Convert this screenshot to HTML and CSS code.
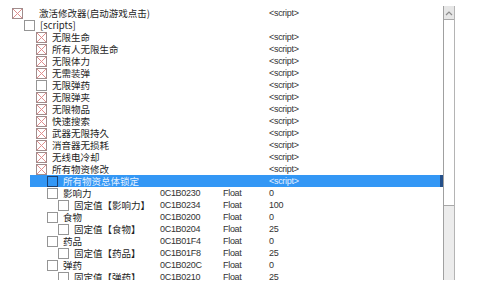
FILE: index.html
```html
<!DOCTYPE html>
<html lang="zh-CN">
<head>
  <meta charset="UTF-8">
  <title>Cheat Table</title>
  <link rel="stylesheet" href="styles.css">
</head>
<body>
  <div class="view">
    <div class="list">
      <div class="row"><div class="name l0"><span class="cb on"></span>激活修改器(启动游戏点击)</div><span class="addr"></span><span class="type"></span><span class="val">&lt;script&gt;</span></div>
      <div class="row"><div class="name l1"><span class="cb"></span>[scripts]</div><span class="addr"></span><span class="type"></span><span class="val"></span></div>
      <div class="row"><div class="name l2"><span class="cb on"></span>无限生命</div><span class="addr"></span><span class="type"></span><span class="val">&lt;script&gt;</span></div>
      <div class="row"><div class="name l2"><span class="cb on"></span>所有人无限生命</div><span class="addr"></span><span class="type"></span><span class="val">&lt;script&gt;</span></div>
      <div class="row"><div class="name l2"><span class="cb on"></span>无限体力</div><span class="addr"></span><span class="type"></span><span class="val">&lt;script&gt;</span></div>
      <div class="row"><div class="name l2"><span class="cb on"></span>无需装弹</div><span class="addr"></span><span class="type"></span><span class="val">&lt;script&gt;</span></div>
      <div class="row"><div class="name l2"><span class="cb"></span>无限弹药</div><span class="addr"></span><span class="type"></span><span class="val">&lt;script&gt;</span></div>
      <div class="row"><div class="name l2"><span class="cb on"></span>无限弹夹</div><span class="addr"></span><span class="type"></span><span class="val">&lt;script&gt;</span></div>
      <div class="row"><div class="name l2"><span class="cb on"></span>无限物品</div><span class="addr"></span><span class="type"></span><span class="val">&lt;script&gt;</span></div>
      <div class="row"><div class="name l2"><span class="cb on"></span>快速搜索</div><span class="addr"></span><span class="type"></span><span class="val">&lt;script&gt;</span></div>
      <div class="row"><div class="name l2"><span class="cb on"></span>武器无限持久</div><span class="addr"></span><span class="type"></span><span class="val">&lt;script&gt;</span></div>
      <div class="row"><div class="name l2"><span class="cb on"></span>消音器无损耗</div><span class="addr"></span><span class="type"></span><span class="val">&lt;script&gt;</span></div>
      <div class="row"><div class="name l2"><span class="cb on"></span>无线电冷却</div><span class="addr"></span><span class="type"></span><span class="val">&lt;script&gt;</span></div>
      <div class="row"><div class="name l2"><span class="cb on"></span>所有物资修改</div><span class="addr"></span><span class="type"></span><span class="val">&lt;script&gt;</span></div>
      <div class="row sel"><div class="name l3"><span class="cb"></span>所有物资总体锁定</div><span class="addr"></span><span class="type"></span><span class="val">&lt;script&gt;</span></div>
      <div class="row"><div class="name l3"><span class="cb"></span>影响力</div><span class="addr">0C1B0230</span><span class="type">Float</span><span class="val">0</span></div>
      <div class="row"><div class="name l4"><span class="cb"></span>固定值【影响力】</div><span class="addr">0C1B0234</span><span class="type">Float</span><span class="val">100</span></div>
      <div class="row"><div class="name l3"><span class="cb"></span>食物</div><span class="addr">0C1B0200</span><span class="type">Float</span><span class="val">0</span></div>
      <div class="row"><div class="name l4"><span class="cb"></span>固定值【食物】</div><span class="addr">0C1B0204</span><span class="type">Float</span><span class="val">25</span></div>
      <div class="row"><div class="name l3"><span class="cb"></span>药品</div><span class="addr">0C1B01F4</span><span class="type">Float</span><span class="val">0</span></div>
      <div class="row"><div class="name l4"><span class="cb"></span>固定值【药品】</div><span class="addr">0C1B01F8</span><span class="type">Float</span><span class="val">25</span></div>
      <div class="row"><div class="name l3"><span class="cb"></span>弹药</div><span class="addr">0C1B020C</span><span class="type">Float</span><span class="val">0</span></div>
      <div class="row"><div class="name l4"><span class="cb"></span>固定值【弹药】</div><span class="addr">0C1B0210</span><span class="type">Float</span><span class="val">25</span></div>
    </div>
    <div class="scrollbar">
      <div class="sb-up">
        <svg width="8" height="6" viewBox="0 0 8 6"><path d="M1 5 L4 2 L7 5" fill="none" stroke="#8c8c8c" stroke-width="1.2"/></svg>
      </div>
      <div class="sb-thumb"></div>
      <div class="sb-track"></div>
    </div>
  </div>
</body>
</html>
```

FILE: styles.css
```css
body {
  margin: 0;
  background-color: #fff;
  color: #222;
}
.view {
  display: flex;
  height: 280px;
}
.list {
  width: 443px;
  padding-top: 7px;
  overflow: hidden;
}
.row {
  display: flex;
  align-items: center;
  height: 12px;
  line-height: 12px;
  font-family: 'Liberation Sans', sans-serif;
  font-size: 9px;
  letter-spacing: -0.3px;
  color: #333;
}
.name {
  width: 160px;
  height: 12px;
  display: flex;
  align-items: center;
  box-sizing: border-box;
  white-space: nowrap;
  font-family: 'Noto Sans CJK SC', sans-serif;
  font-size: 9.5px;
  line-height: 12px;
  letter-spacing: 0;
  color: #1e1e1e;
}
.l0 { padding-left: 12px; }
.l1 { padding-left: 24px; }
.l2 { padding-left: 36px; }
.l3 { padding-left: 47px; }
.l4 { padding-left: 58px; }
.cb {
  width: 11px;
  height: 11px;
  box-sizing: border-box;
  border: 1px solid #959595;
  background-color: #fff;
  margin-right: 5px;
  flex-shrink: 0;
}
.l0 .cb {
  margin-right: 16px;
}
.cb.on {
  border-color: #a08c8c;
  background:
    linear-gradient(45deg, transparent 45%, #e08e8e 45%, #e08e8e 55%, transparent 55%),
    linear-gradient(-45deg, transparent 45%, #e08e8e 45%, #e08e8e 55%, transparent 55%),
    #fff;
}
.addr {
  width: 63px;
}
.type {
  width: 46px;
}
.val {
  flex: 1;
}
.sel {
  background: linear-gradient(to right, transparent 30px, #3397f5 30px, #3397f5 440px, #24508a 440px);
  color: #e4f0ff;
}
.sel .name {
  color: #e4f0ff;
}
.sel .cb {
  background-color: #3397f5;
  border-color: #1d3f6e;
}
.scrollbar {
  width: 10px;
  margin-top: 6px;
  display: flex;
  flex-direction: column;
  border-left: 1px solid #a0a0a0;
  border-right: 1px solid #b4b4b4;
}
.sb-up {
  height: 13px;
  background-color: #e6e6e6;
  border-bottom: 1px solid #a8a8a8;
  display: flex;
  align-items: center;
  justify-content: center;
}
.sb-thumb {
  height: 185px;
  background-color: #fff;
  border-bottom: 1px solid #a8a8a8;
}
.sb-track {
  flex: 1;
  background-color: #ececec;
}
```
